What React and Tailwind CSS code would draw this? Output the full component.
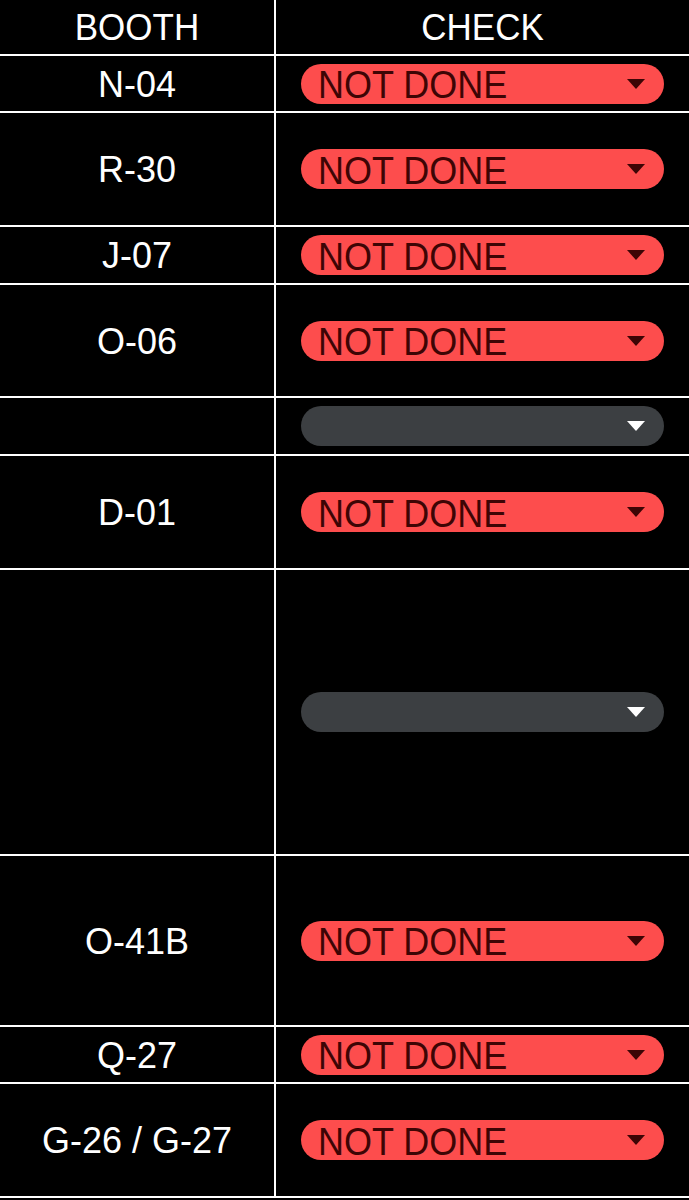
const rows = [
  { booth: "N-04", status: "NOT DONE", h: "h-[55px]" },
  { booth: "R-30", status: "NOT DONE", h: "h-[112px]" },
  { booth: "J-07", status: "NOT DONE", h: "h-[56px]" },
  { booth: "O-06", status: "NOT DONE", h: "h-[111px]" },
  { booth: "", status: "", h: "h-[56px]" },
  { booth: "D-01", status: "NOT DONE", h: "h-[112px]" },
  { booth: "", status: "", h: "h-[284px]" },
  { booth: "O-41B", status: "NOT DONE", h: "h-[169px]" },
  { booth: "Q-27", status: "NOT DONE", h: "h-[55px]" },
  { booth: "G-26 / G-27", status: "NOT DONE", h: "h-[112px]" },
];

function StatusSelect({ status }) {
  const done = status === "NOT DONE";
  return (
    <div
      className={
        done
          ? "flex h-[40px] w-full items-center justify-between rounded-full bg-[#fd4d4d] pl-[17px] pr-[19px]"
          : "flex h-[40px] w-full items-center justify-between rounded-full bg-[#3c3f42] pl-[17px] pr-[19px]"
      }
    >
      <span className="mt-[3px] inline-block scale-y-110 text-[36px] leading-[40px] text-[#3d0505]">
        {status}
      </span>
      <svg width="18" height="10" viewBox="0 0 18 10">
        <path d="M0 0 H18 L9 10 Z" fill={done ? "#3d0505" : "#ffffff"} />
      </svg>
    </div>
  );
}

export default function App() {
  return (
    <div
      className="h-[1200px] w-[689px] overflow-hidden bg-black text-white"
      style={{ fontFamily: '"Liberation Sans", Arial, sans-serif' }}
    >
      <div className="flex h-[56px] border-b-2 border-white">
        <div className="flex w-[276px] items-center justify-center border-r-2 border-white text-[35px]">
          <span className="inline-block scale-y-105">BOOTH</span>
        </div>
        <div className="flex flex-1 items-center justify-center text-[35px]">
          <span className="inline-block scale-y-105">CHECK</span>
        </div>
      </div>
      {rows.map((row, i) => (
        <div key={i} className="flex border-b-2 border-white">
          <div
            className={`flex w-[276px] items-center justify-center border-r-2 border-white text-[36px] ${row.h}`}
          >
            <span className="inline-block scale-y-105">{row.booth}</span>
          </div>
          <div className="flex flex-1 items-center px-[25px]">
            <StatusSelect status={row.status} />
          </div>
        </div>
      ))}
    </div>
  );
}
